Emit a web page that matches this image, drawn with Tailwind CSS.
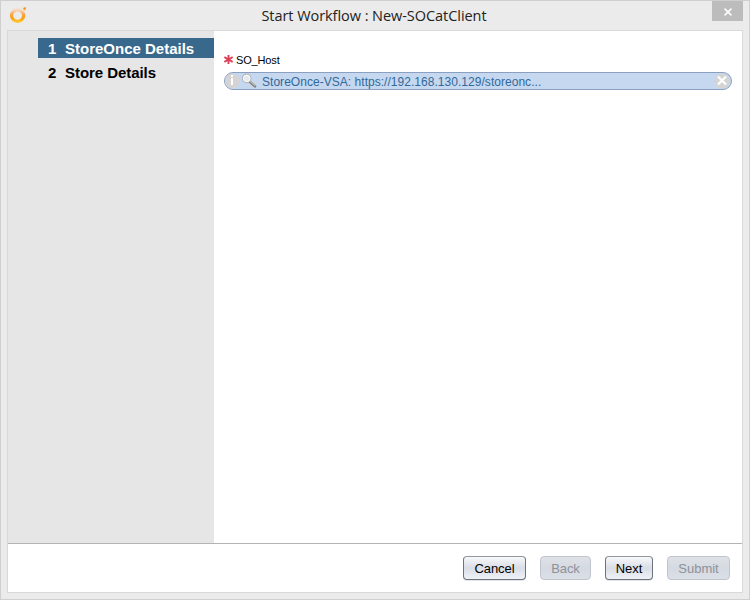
<!DOCTYPE html>
<html lang="en">
<head>
<meta charset="utf-8">
<title>Start Workflow</title>
<script src="https://cdn.jsdelivr.net/npm/@tailwindcss/browser@4"></script>
</head>
<body class="w-[750px] h-[600px] overflow-hidden">
<div class="w-[750px] h-[600px] flex flex-col border border-[#cfcfcf] bg-[#ebebeb] px-[6px] pb-[6px] font-['Liberation_Sans',Arial,sans-serif] text-black">
  <header class="h-[29px] shrink-0 grid grid-cols-[29px_1fr_31px]">
    <svg class="w-[20px] h-[22px] ml-px mt-[3px]" viewBox="0 0 20 22">
      <defs><linearGradient id="ring" x1="0" y1="0" x2="0" y2="1"><stop offset="0" stop-color="#f6d9c3"/><stop offset=".4" stop-color="#f7a64a"/><stop offset=".7" stop-color="#fb9d12"/><stop offset="1" stop-color="#ffc425"/></linearGradient></defs>
      <ellipse cx="9.6" cy="11.6" rx="6.1" ry="5.8" fill="none" stroke="url(#ring)" stroke-width="3.2"/>
      <path d="M15 4.2Q16.5 2.9 18.2 3.5Q18.2 5.7 16.2 6.5Z" fill="#f8971d"/>
    </svg>
    <h1 class="text-center whitespace-nowrap text-[14.5px] leading-[20px] pt-[5px] tracking-[-0.05px] text-[#222] font-['Open_Sans','Noto_Sans',sans-serif]">Start Workflow : New-SOCatClient</h1>
    <button class="w-[31px] h-[20px] bg-[#bcbcbc] flex items-center justify-center">
      <svg class="w-[8px] h-[8px] mt-px" viewBox="0 0 8 8"><path d="M.5 .7L7.5 7.3M7.5 .7L.5 7.3" stroke="#fff" stroke-width="1.6"/></svg>
    </button>
  </header>
  <main class="grow flex flex-col border border-[#d9d9d9] bg-white">
    <div class="h-[513px] shrink-0 flex border-b border-[#b4b4b4]">
      <nav class="w-[206px] shrink-0 bg-[#e6e6e6] pl-[30px] pt-[7px] text-[15px] font-bold whitespace-nowrap">
        <div class="h-[20px] bg-[#38698c] text-white flex pl-[10px] leading-[21px]"><span class="w-[17px]">1</span><span>StoreOnce Details</span></div>
        <div class="h-[20px] mt-[4px] flex pl-[10px] leading-[21px]"><span class="w-[17px]">2</span><span class="tracking-[-0.06px]">Store Details</span></div>
      </nav>
      <section class="grow pl-[10px] pr-[10px] pt-[22px]">
        <div class="h-[14px] flex items-center text-[11px] leading-[14px] tracking-[-0.15px]">
          <svg class="w-[9px] h-[9px] mr-[3px] -mt-px" viewBox="0 0 9 9"><path d="M4.5 0V9M.3 2.1L8.7 6.9M8.7 2.1L.3 6.9" stroke="#dc4056" stroke-width="1.9"/></svg>
          <span>SO_Host</span>
        </div>
        <div class="mt-[5px] h-[18px] w-[508px] rounded-full border border-[#8ba0c0] bg-[#c6d7f0] flex items-center overflow-hidden text-[12px] text-[#316a9a]">
          <svg class="w-[15px] h-[16px] shrink-0" viewBox="0 0 15 16"><circle cx="7" cy="8" r="7.5" fill="#d4d4d4"/><path d="M6 2H8V4H6ZM6 5H8V12H6Z" fill="#fff"/></svg>
          <svg class="w-[16px] h-[16px] shrink-0 ml-px" viewBox="0 0 16 16"><path d="M8.8 8.8L14 13.3" stroke="#85827e" stroke-width="2.6" stroke-linecap="round"/><path d="M9.3 8.4L14 12.4" stroke="#c5c1bb" stroke-width="1.2" stroke-linecap="round"/><circle cx="5.7" cy="5.4" r="4.2" fill="#e2e9f3" stroke="#b5b3b0" stroke-width="1.2"/><circle cx="5.7" cy="5.4" r="3.3" fill="none" stroke="#fff" stroke-width="1"/></svg>
          <span class="ml-[5px] grow whitespace-nowrap leading-[16px] pt-[2px] tracking-[0.035px]">StoreOnce-VSA: https://192.168.130.129/storeonc...</span>
          <svg class="w-[16px] h-[16px] shrink-0 mr-px" viewBox="0 0 16 16"><circle cx="8" cy="8" r="7.5" fill="#d4d4d4"/><path d="M4 3.5L12 11.5M12 3.5L4 11.5" stroke="#fff" stroke-width="2.2"/></svg>
        </div>
      </section>
    </div>
    <footer class="flex pt-[12px] pl-[455px] text-[13px]">
      <button class="w-[63px] h-[24px] rounded-[4px] border border-[#6d737d] border-t-[#92969d] bg-linear-to-b from-[#f7f8fa] via-[#d9dde5] to-[#eff2f8] shadow-[0_1px_0_#e3e5e8] pt-px leading-[21px] tracking-[-0.1px]">Cancel</button>
      <button class="w-[51px] h-[24px] ml-[14px] rounded-[4px] border border-[#bfc4cd] bg-linear-to-b from-[#dfe2e7] via-[#d5d9e1] to-[#dbdfe6] pt-px leading-[21px] tracking-[-0.1px] text-[#8e9299]">Back</button>
      <button class="w-[48px] h-[24px] ml-[14px] rounded-[4px] border border-[#6d737d] border-t-[#92969d] bg-linear-to-b from-[#f7f8fa] via-[#d9dde5] to-[#eff2f8] shadow-[0_1px_0_#e3e5e8] pt-px leading-[21px] tracking-[-0.1px]">Next</button>
      <button class="w-[63px] h-[24px] ml-[14px] rounded-[4px] border border-[#bfc4cd] bg-linear-to-b from-[#dfe2e7] via-[#d5d9e1] to-[#dbdfe6] pt-px leading-[21px] text-[#8e9299]">Submit</button>
    </footer>
  </main>
</div>
</body>
</html>
